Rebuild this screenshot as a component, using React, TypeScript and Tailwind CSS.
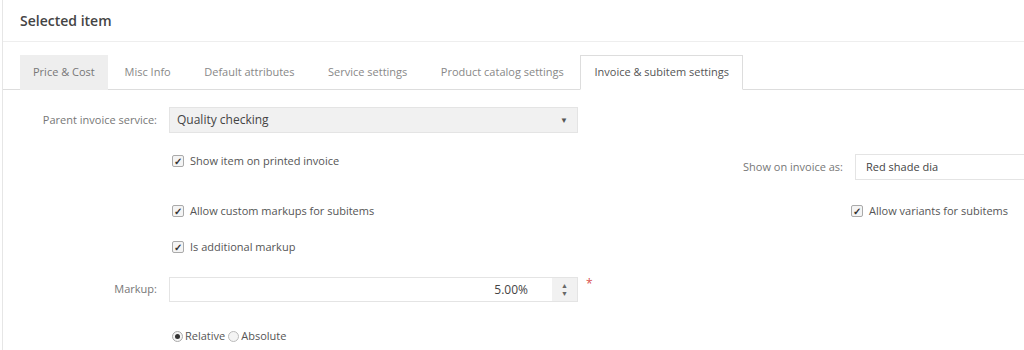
const tabs = [
  "Price & Cost",
  "Misc Info",
  "Default attributes",
  "Service settings",
  "Product catalog settings",
  "Invoice & subitem settings",
];

const Check = ({ label }: { label: string }) => (
  <label className="flex h-[16px] items-center gap-[6px] text-[11px] text-[#555]">
    <span className="flex h-[12px] w-[12px] items-center justify-center rounded-[2px] border border-[#aaa] bg-[#f4f4f4] text-[10px] font-bold leading-none text-[#333]">
      ✓
    </span>
    {label}
  </label>
);

const App = () => {
  return (
    <div className="h-[350px] w-[1024px] overflow-hidden bg-white font-['Open_Sans',sans-serif]">
      <div className="ml-[2px] h-full border-l border-[#e6e6e6]">
        {/* Header */}
        <div className="flex h-[42px] items-center border-b border-[#eee] pl-[17px]">
          <h2 className="text-[14px] font-semibold text-[#444]">Selected item</h2>
        </div>

        {/* Tabs */}
        <div className="mt-[13px] flex h-[35px] border-b border-[#ddd] pl-[17px]">
          {tabs.map((t, i) => {
            const active = i === tabs.length - 1;
            const first = i === 0;
            return (
              <div
                key={t}
                className={`-mb-px flex items-center text-[11px] ${
                  active
                    ? "border border-[#ddd] border-b-white bg-white px-[13px] text-[#555]"
                    : first
                      ? "bg-[#eee] px-[13px] text-[#777]"
                      : "px-[16.75px] text-[#888]"
                }`}
              >
                {t}
              </div>
            );
          })}
        </div>

        {/* Form */}
        <div className="pt-[17px]">
          <div className="flex items-center">
            <span className="w-[166px] pr-[12px] text-right text-[11px] text-[#777]">
              Parent invoice service:
            </span>
            <div className="flex h-[26px] w-[409px] items-center justify-between border border-[#e4e4e4] bg-[#f1f1f1] pl-[7px] pr-[9px] text-[12px] text-[#444]">
              Quality checking
              <span className="text-[8px] text-[#555]">▼</span>
            </div>
          </div>

          <div className="flex h-[48px] items-start justify-between">
            <div className="ml-[169px] mt-[20px]">
              <Check label="Show item on printed invoice" />
            </div>
            <div className="mt-[21px] flex items-center">
              <span className="pr-[12px] text-[11px] text-[#777]">Show on invoice as:</span>
              <div className="flex h-[26px] w-[169px] items-center border border-r-0 border-[#e4e4e4] bg-white pl-[10px] text-[11px] text-[#444]">
                Red shade dia
              </div>
            </div>
          </div>

          <div className="mt-[22px] flex justify-between">
            <div className="ml-[169px]">
              <Check label="Allow custom markups for subitems" />
            </div>
            <div className="mr-[16px]">
              <Check label="Allow variants for subitems" />
            </div>
          </div>

          <div className="ml-[169px] mt-[20px]">
            <Check label="Is additional markup" />
          </div>

          <div className="mt-[22px] flex items-center">
            <span className="w-[166px] pr-[12px] text-right text-[11px] text-[#777]">Markup:</span>
            <div className="flex h-[25px] w-[409px] border border-[#e4e4e4] bg-white">
              <div className="flex flex-1 items-center justify-end pr-[24px] text-[12px] text-[#444]">
                5.00%
              </div>
              <div className="flex w-[25px] flex-col items-center justify-center bg-[#f1f1f1] text-[7px] leading-[8px] text-[#666]">
                <span>▲</span>
                <span>▼</span>
              </div>
            </div>
            <span className="ml-[8px] self-start text-[12px] leading-[14px] text-[#d9534f]">*</span>
          </div>

          <div className="ml-[169px] mt-[26px] flex h-[16px] items-center text-[11px] text-[#555]">
            <span className="mr-[2px] flex h-[11px] w-[11px] items-center justify-center rounded-full border border-[#aaa] bg-[#f4f4f4]">
              <span className="h-[5px] w-[5px] rounded-full bg-[#333]" />
            </span>
            Relative
            <span className="ml-[3px] mr-[2px] h-[11px] w-[11px] rounded-full border border-[#bbb] bg-[#f4f4f4]" />
            Absolute
          </div>
        </div>
      </div>
    </div>
  );
};

export default App;
